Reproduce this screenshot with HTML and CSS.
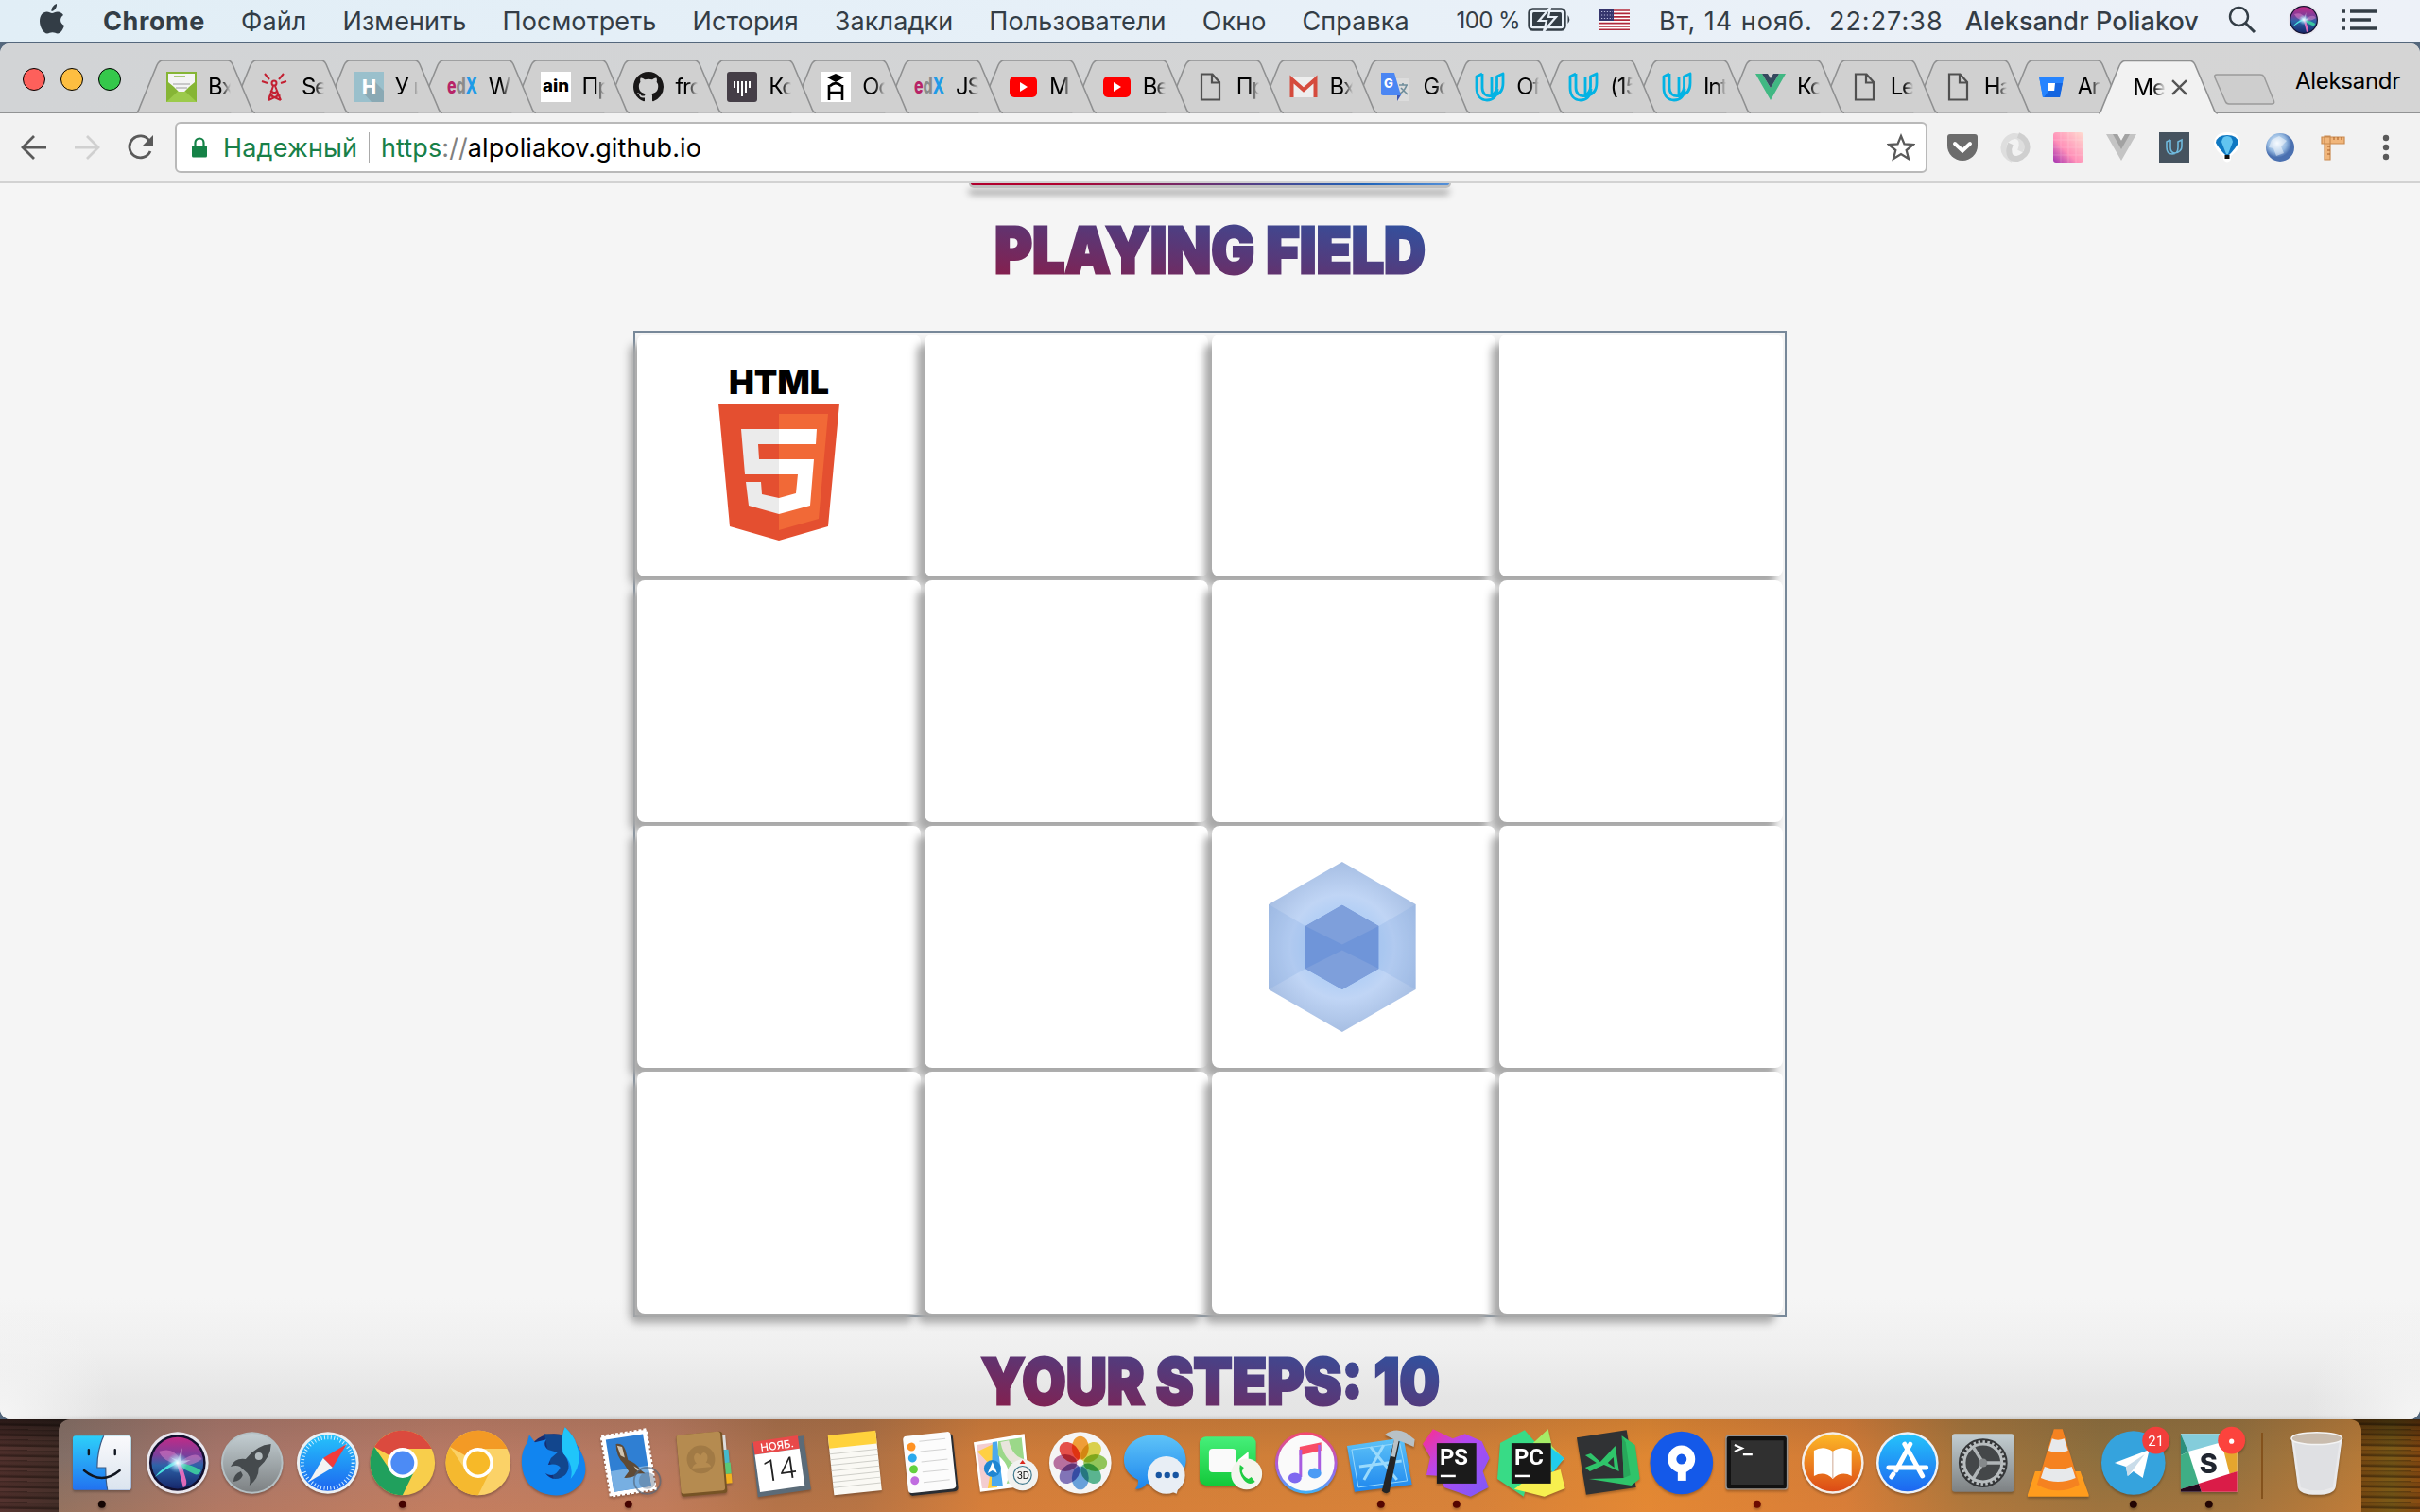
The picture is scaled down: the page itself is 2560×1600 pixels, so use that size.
FILE: index.html
```html
<!DOCTYPE html>
<html lang="ru">
<head>
<meta charset="utf-8">
<title>Memory game</title>
<link rel="stylesheet" href="styles.css">
</head>
<body>
<svg class="sprite" aria-hidden="true">
  <defs>
    <linearGradient id="heading" x1="0" y1="1" x2="1" y2="0"><stop offset="0" stop-color="#8e1a45"/><stop offset=".5" stop-color="#583878"/><stop offset="1" stop-color="#2857a8"/></linearGradient>
    <radialGradient id="wp" cx="1419.8" cy="1002" r="92" gradientUnits="userSpaceOnUse"><stop offset=".45" stop-color="#b5d0f5"/><stop offset=".6" stop-color="#c0d5f5"/><stop offset="1" stop-color="#a5bde2"/></radialGradient>
    <linearGradient id="finder" x1="0" y1="0" x2="0" y2="1"><stop offset="0" stop-color="#2dd0fa"/><stop offset="1" stop-color="#2272f0"/></linearGradient>
    <linearGradient id="white" x1="0" y1="0" x2="0" y2="1"><stop offset="0" stop-color="#fafafc"/><stop offset="1" stop-color="#dbe4ef"/></linearGradient>
    <linearGradient id="siri" x1="0" y1="0" x2="0" y2="1"><stop offset="0" stop-color="#c22a86"/><stop offset=".35" stop-color="#7b3f9c"/><stop offset=".55" stop-color="#2d63a8"/><stop offset="1" stop-color="#16276b"/></linearGradient>
    <radialGradient id="glow"><stop offset="0" stop-color="#fff"/><stop offset=".3" stop-color="#c9f0ff" stop-opacity=".8"/><stop offset="1" stop-color="#7fd8f5" stop-opacity="0"/></radialGradient>
    <linearGradient id="silver" x1="0" y1="0" x2="0" y2="1"><stop offset="0" stop-color="#c3ced2"/><stop offset="1" stop-color="#7d8183"/></linearGradient>
    <linearGradient id="blue" x1="0" y1="0" x2="0" y2="1"><stop offset="0" stop-color="#25c3fb"/><stop offset="1" stop-color="#1d66f0"/></linearGradient>
    <linearGradient id="sky" x1="0" y1="0" x2="0" y2="1"><stop offset="0" stop-color="#5fc4f8"/><stop offset="1" stop-color="#1d86ee"/></linearGradient>
    <linearGradient id="green" x1="0" y1="0" x2="0" y2="1"><stop offset="0" stop-color="#46ef7a"/><stop offset="1" stop-color="#14c93a"/></linearGradient>
    <linearGradient id="orange" x1="0" y1="0" x2="0" y2="1"><stop offset="0" stop-color="#fdb827"/><stop offset="1" stop-color="#dc4a16"/></linearGradient>
    <linearGradient id="tunes" x1="0" y1="0" x2="0" y2="1"><stop offset="0" stop-color="#f5486a"/><stop offset=".6" stop-color="#a060e8"/><stop offset="1" stop-color="#3db4f8"/></linearGradient>
    <linearGradient id="storm" x1="0" y1="0" x2="1" y2="1"><stop offset="0" stop-color="#ff2d8a"/><stop offset=".4" stop-color="#b548f0"/><stop offset="1" stop-color="#7a5af8"/></linearGradient>
    <linearGradient id="pink" x1="0" y1="1" x2="1" y2="0"><stop offset="0" stop-color="#a431b0"/><stop offset=".4" stop-color="#ff8fb8"/><stop offset="1" stop-color="#ffdcd0"/></linearGradient>
    <radialGradient id="globe" cx=".4" cy=".35"><stop offset="0" stop-color="#f0f8ff"/><stop offset=".65" stop-color="#94b8e0"/><stop offset="1" stop-color="#4a70b0"/></radialGradient>
  </defs>
  <symbol id="tab" viewBox="0 0 126 57"><path d="M0 56.500C2 56 3 53 4 50L22 6Q24.500 1 28 1H97Q100 1 102 5L121 50Q123 56 126 56.500" stroke="#8f9091" stroke-width="1.600"/></symbol>
  <symbol id="page" viewBox="0 0 32 32"><path d="M7 2.500H18.500L26 11V29.500H7ZM18 3V11.500H26" fill="none" stroke="#505050" stroke-width="2.200"/></symbol>
  <symbol id="udacity" viewBox="0 0 32 32"><path d="M8 2L2 5V17C2 26 7 30 13 30S24 26 24 18M8 2V17C8 23 12 26 17 25.500C25 25 30 21 30 12V2L23.500 5V16C23.500 20 21 23 18 25.500V5" fill="none" stroke="#02b3e4" stroke-width="2.800" stroke-linejoin="round"/></symbol>
  <symbol id="youtube" viewBox="0 0 32 32"><rect x="2" y="5" width="29" height="22" rx="5" fill="#f00"/><path d="M13 11L21 16L13 21Z" fill="#fff"/></symbol>
  <symbol id="vue" viewBox="0 0 32 32"><path d="M0 2H7L16 17L25 2H32L16 30Z" fill="#41b883"/><path d="M7 2H13L16 7L19 2H25L16 17Z" fill="#35495e"/></symbol>
  <symbol id="siriball" viewBox="-34 -34 68 68"><circle r="33" fill="#e9e7ee"/><circle r="30" fill="#120f2e"/><circle r="27.500" fill="url(#siri)"/><path d="M-20-12Q-4-18 4-2Q20-14 26-4Q12 6 0 1Q-14 0-20-12Z" fill="#f08fd0" opacity=".45"/><path d="M1 0Q-12 6-24 15Q-17 5 0-3Z" fill="#4ef0e4" opacity=".9"/><path d="M2 0Q16 2 25 8Q22 15 16 11Q8 8 1 2Z" fill="#3fd8a0" opacity=".85"/><path d="M-1 0Q3 13 6 26Q12 25 8 14Q6 6 3 0Z" fill="#f56fc0" opacity=".9"/><path d="M-8-6L0-3L5-16L4-2L14-3L4 2Z" fill="#fff" opacity=".45"/><circle r="11" fill="url(#glow)"/></symbol>
</svg>

<header class="menubar">
  <svg class="apple" viewBox="0 0 26 32"><path d="M18 0C18.500 4 15.500 8 12.500 8C12 4 15 1 18 0ZM13 10C15 10 16 8.500 19 8.500C21.500 8.500 23.800 9.800 25 12C20.500 15 21.500 21 26 23C24.500 27.500 22 31.500 19 31.500C17 31.500 16 30.300 13.500 30.300S10 31.500 8 31.500C4 31.500 0 24.500 0 18.500C0 12 3.500 8.500 7.500 8.500C10 8.500 11.500 10 13 10Z" fill="#333d46"/></svg>
  <nav class="menus"><b>Chrome</b><span>Файл</span><span>Изменить</span><span>Посмотреть</span><span>История</span><span>Закладки</span><span>Пользователи</span><span>Окно</span><span>Справка</span></nav>
  <div class="status">
    <span class="percent">100 %</span>
    <svg class="battery" viewBox="0 0 46 26"><rect x="1.500" y="1.500" width="38" height="22" rx="4" fill="none" stroke="#333d46" stroke-width="2.400"/><rect x="5" y="5" width="31" height="15" rx="1.500" fill="#333d46"/><path d="M42.500 8Q46 12.500 42.500 17Z" fill="#333d46"/><path d="M24 0L12 14H20L17 25L30 10H22Z" fill="#333d46" stroke="#e9f0f8" stroke-width="2.200"/></svg>
    <svg class="flag" viewBox="0 0 32 22"><path d="M0 0H32V22H0Z" fill="#fff"/><path d="M0 1H32M0 4.400H32M0 7.800H32M0 11.200H32M0 14.600H32M0 18H32M0 21.300H32" stroke="#b0273a" stroke-width="1.700"/><path d="M0 0H15V12H0Z" fill="#35356d"/><path d="M2 2.500H14M2 6H14M2 9.500H14" stroke="#b9bcdb" stroke-width="1.200" stroke-dasharray="1.200 1.700"/></svg>
    <span class="clock">Вт, 14 нояб.&nbsp; 22:27:38</span>
    <span class="user">Aleksandr Poliakov</span>
    <svg class="search" viewBox="0 0 30 30"><circle cx="11.500" cy="11.500" r="9.500" fill="none" stroke="#333d46" stroke-width="2.400"/><path d="M18.500 18.500L28 28" stroke="#333d46" stroke-width="3"/></svg>
    <svg class="siri"><use href="#siriball"/></svg>
    <svg class="list" viewBox="0 0 37 22"><path d="M9 2H37M9 11H31M9 20H37M0 2H4M0 11H4M0 20H4" stroke="#333d46" stroke-width="3.600"/></svg>
  </div>
</header>

<main class="window">
  <div class="tabstrip">
    <div class="lights"><i class="red"></i><i class="yellow"></i><i class="lime"></i></div>
    <div class="tabs">
      <div class="tab"><svg class="shape"><use href="#tab"/></svg><svg class="fav" viewBox="0 0 32 32"><path d="M0 0H32V32H0Z" fill="#86b535"/><path d="M0 32L16 17L32 32Z" fill="#9cca4b"/><path d="M2 2H30V11L24 16L19 21H13L8 16L2 11Z" fill="#f4f4f4"/><path d="M8 5H20" stroke="#a9c878" stroke-width="2"/><path d="M7 13H25M10 17H22" stroke="#c8c8c8" stroke-width="2"/></svg><span>Вх</span></div>
      <div class="tab"><svg class="shape"><use href="#tab"/></svg><svg class="fav" viewBox="0 0 32 32"><circle cx="15" cy="12" r="2.500" fill="none" stroke="#c32032" stroke-width="2"/><path d="M14 15L9 30M16 15L22 30M11 20L20 25L9 30M19 20L11 25L22 30M10 8L5 2M8 12L2 10M20 8L25 2M22 12L28 10" fill="none" stroke="#c32032" stroke-width="2"/></svg><span>Se</span></div>
      <div class="tab"><svg class="shape"><use href="#tab"/></svg><svg class="fav" viewBox="0 0 32 32"><path d="M0 0H32V32H0Z" fill="#9ac0cc"/><path d="M11 23L21 9L32 20V32H19Z" fill="#8aa9b4"/><text x="9" y="23" class="glyph" font-size="20" fill="#fff">H</text></svg><span>У и</span></div>
      <div class="tab"><svg class="shape"><use href="#tab"/></svg><svg class="fav" viewBox="0 0 32 32"><text class="edx" x="0" y="23" textLength="32" lengthAdjust="spacingAndGlyphs"><tspan fill="#b72467">e</tspan><tspan fill="#8b8b8b">d</tspan><tspan fill="#1e9be8">X</tspan></text></svg><span>W</span></div>
      <div class="tab"><svg class="shape"><use href="#tab"/></svg><svg class="fav" viewBox="0 0 32 32"><path d="M0 0H32V32H0Z" fill="#fff"/><text x="2" y="21" class="glyph" font-size="17" textLength="28" lengthAdjust="spacingAndGlyphs">ain</text></svg><span>Пр</span></div>
      <div class="tab"><svg class="shape"><use href="#tab"/></svg><svg class="fav" viewBox="0 0 16 16"><path fill="#191717" d="M8 0C3.580 0 0 3.580 0 8c0 3.540 2.290 6.530 5.470 7.590.4.070.55-.17.55-.38 0-.19-.01-.82-.01-1.490-2.010.37-2.530-.49-2.690-.94-.09-.23-.48-.94-.82-1.130-.28-.15-.68-.52-.01-.53.63-.01 1.080.58 1.230.82.72 1.210 1.870.87 2.330.66.070-.52.280-.87.510-1.070-1.780-.2-3.640-.89-3.640-3.950 0-.87.31-1.590.82-2.150-.08-.2-.36-1.020.08-2.120 0 0 .67-.21 2.200.82a7.700 7.700 0 0 1 4 0c1.530-1.040 2.200-.82 2.200-.82.44 1.100.16 1.920.08 2.120.51.560.82 1.270.82 2.150 0 3.070-1.870 3.750-3.650 3.950.29.25.54.73.54 1.480 0 1.070-.01 1.930-.01 2.200 0 .21.15.46.55.38A8 8 0 0 0 16 8c0-4.420-3.580-8-8-8Z"/></svg><span>fro</span></div>
      <div class="tab"><svg class="shape"><use href="#tab"/></svg><svg class="fav" viewBox="0 0 32 32"><rect width="32" height="32" rx="3" fill="#453e47"/><path d="M8 10V17M12 10V22M16 10V26M20 10V22M24 10V17" stroke="#fff" stroke-width="2"/></svg><span>Ко</span></div>
      <div class="tab"><svg class="shape"><use href="#tab"/></svg><svg class="fav" viewBox="0 0 32 32"><path d="M0 0H32V32H0Z" fill="#fff"/><path d="M16 2L25 6L16 11L7 6Z"/><path d="M9 14V30M23 14V30M9 22H23M10 15Q16 9 22 15" fill="none" stroke="#000" stroke-width="2.600"/></svg><span>Ос</span></div>
      <div class="tab"><svg class="shape"><use href="#tab"/></svg><svg class="fav" viewBox="0 0 32 32"><text class="edx" x="0" y="23" textLength="32" lengthAdjust="spacingAndGlyphs"><tspan fill="#b72467">e</tspan><tspan fill="#8b8b8b">d</tspan><tspan fill="#1e9be8">X</tspan></text></svg><span>JS</span></div>
      <div class="tab"><svg class="shape"><use href="#tab"/></svg><svg class="fav"><use href="#youtube"/></svg><span>M</span></div>
      <div class="tab"><svg class="shape"><use href="#tab"/></svg><svg class="fav"><use href="#youtube"/></svg><span>Ве</span></div>
      <div class="tab"><svg class="shape"><use href="#tab"/></svg><svg class="fav"><use href="#page"/></svg><span>Пр</span></div>
      <div class="tab"><svg class="shape"><use href="#tab"/></svg><svg class="fav" viewBox="0 0 32 32"><path d="M2 6H30V27H2Z" fill="#eee"/><path d="M3.500 27V8L16 19L28.500 8V27" fill="none" stroke="#d54b3d" stroke-width="4"/></svg><span>Вх</span></div>
      <div class="tab"><svg class="shape"><use href="#tab"/></svg><svg class="fav" viewBox="0 0 32 32"><path d="M12 7H30V31H18Z" fill="#dcdcdc"/><path d="M17 23H22L17 31Z" fill="#3b55b5"/><path d="M0 1H14L21 25H2Q0 25 0 23Z" fill="#4b86f3"/><text x="3" y="17" class="glyph" font-size="13" fill="#fff">G</text><path d="M19 14H28M23 12V14M27 14Q25 20 20 23M21 17L28 24" fill="none" stroke="#6f8d9b" stroke-width="1.600"/></svg><span>Go</span></div>
      <div class="tab"><svg class="shape"><use href="#tab"/></svg><svg class="fav"><use href="#udacity"/></svg><span>Of</span></div>
      <div class="tab"><svg class="shape"><use href="#tab"/></svg><svg class="fav"><use href="#udacity"/></svg><span>(15</span></div>
      <div class="tab"><svg class="shape"><use href="#tab"/></svg><svg class="fav"><use href="#udacity"/></svg><span>Int</span></div>
      <div class="tab"><svg class="shape"><use href="#tab"/></svg><svg class="fav"><use href="#vue"/></svg><span>Ко</span></div>
      <div class="tab"><svg class="shape"><use href="#tab"/></svg><svg class="fav"><use href="#page"/></svg><span>Le</span></div>
      <div class="tab"><svg class="shape"><use href="#tab"/></svg><svg class="fav"><use href="#page"/></svg><span>На</span></div>
      <div class="tab"><svg class="shape"><use href="#tab"/></svg><svg class="fav" viewBox="0 0 32 32"><path d="M3 5H29L25 27H7Z" fill="#2684ff"/><path d="M20 12H28L25 27H8Z" fill="#1465e0"/><path d="M3 5H29L28 12H20V20H12L8 27H7Z" fill="#2684ff"/><path d="M12 12H20L19 20H13Z" fill="#fff"/></svg><span>Ar</span></div>
      <div class="tab active"><svg class="shape"><use href="#tab"/></svg><span>Me</span><svg class="close" viewBox="0 0 16 16"><path d="M1 1L15 15M15 1L1 15" stroke="#555" stroke-width="2.200"/></svg></div>
    </div>
    <svg class="newtab" viewBox="0 0 66 33"><path d="M4 1H50Q53 1 54 3L64.500 29Q65.500 32 62 32H17Q14 32 13 29L2 4Q1 1 4 1Z" fill="#cecece" stroke="#9b9b9b" stroke-width="1.500"/></svg>
    <span class="profile">Aleksandr</span>
  </div>

  <div class="toolbar">
    <svg class="nav" viewBox="0 0 28 28"><path d="M27 14H3M14 2L2 14L14 26" fill="none" stroke="#5a5a5a" stroke-width="2.800"/></svg>
    <svg class="nav forward" viewBox="0 0 28 28"><path d="M1 14H25M14 2L26 14L14 26" fill="none" stroke="#d0d0d0" stroke-width="2.800"/></svg>
    <svg class="nav reload" viewBox="0 0 28 28"><path d="M24 18A11.500 11.500 0 1 1 23 7" fill="none" stroke="#5a5a5a" stroke-width="2.800"/><path d="M27 1V12H16Z" fill="#5a5a5a"/></svg>
    <div class="omnibox">
      <svg class="lock" viewBox="0 0 18 22"><rect x="1" y="9" width="16" height="12.500" rx="1.500" fill="#158247"/><path d="M4.500 9V6A4.500 4.500 0 0 1 13.500 6V9" fill="none" stroke="#158247" stroke-width="2.200"/></svg>
      <span class="secure">Надежный</span><i class="sep"></i>
      <span class="url"><em>https</em><small>://</small>alpoliakov.github.io</span>
      <svg class="star" viewBox="0 0 30 30"><path d="M15 3L18.500 11.500L28 12L20.700 18L23 27L15 22L7 27L9.300 18L2 12L11.500 11.500Z" fill="none" stroke="#5a5a5a" stroke-width="2.300"/></svg>
    </div>
    <div class="extensions">
      <svg viewBox="0 0 32 32"><path d="M3 2H29Q32 2 32 5V14A16 16 0 0 1 0 14V5Q0 2 3 2Z" fill="#6c6c6c"/><path d="M8 12L16 19.500L24 12" fill="none" stroke="#fff" stroke-width="4" stroke-linecap="round"/></svg>
      <svg viewBox="0 0 32 32"><g fill="none" stroke-width="6"><path d="M13 29C0 24 0 8 14 4C24 3 24 14 21 20" stroke="#dedede"/><path d="M19 3C32 8 32 24 18 28C8 29 8 18 11 12" stroke="#cfcfcf"/></g></svg>
      <svg viewBox="0 0 32 32"><rect width="32" height="32" rx="3" fill="url(#pink)"/><path d="M8 0V32M16 0V32M24 0V32M0 8H32M0 16H32M0 24H32" stroke="#fff" opacity=".18"/></svg>
      <svg viewBox="0 0 32 32"><path d="M0 2H12L16 9L20 2H32L16 30Z" fill="#c4c4c4"/><path d="M7 2H12L16 9L20 2H25L16 18Z" fill="#a2a2a2"/></svg>
      <svg viewBox="0 0 32 32"><path d="M0 0H32V32H0Z" fill="#46535f"/><path d="M12 8L8 10V16Q8 23 14 23T20 16V10L24 8V15Q24 21 16 22Q12 21 12 16V8" fill="none" stroke="#6fb9dd" stroke-width="1.600"/></svg>
      <svg viewBox="0 0 32 32"><path d="M16 0Q29 0 30 12Q28 19 20 25V29Q16 34 12 29V25Q3 19 2 12Q3 0 16 0Z" fill="#fff"/><path d="M4 11Q5 3 16 3T28 11Q25 17 18 24H14Q7 17 4 11Z" fill="#0f78c2"/><path d="M10 10Q11 4 16 4T22 10L17 23H15Z" fill="#62c4f0"/><path d="M13.500 24H18.500V28H13.500Z" fill="#111"/></svg>
      <svg viewBox="0 0 32 32"><circle cx="16" cy="16" r="15" fill="url(#globe)"/><path d="M7 8L15 4L23 9L17 15L20 22L12 25L9 17L4 16Z" fill="#fff" opacity=".45"/></svg>
      <svg viewBox="0 0 32 32"><path d="M7 4H13V29H7ZM4 5H28V12H4Z" fill="#f1b67b" stroke="#c98a50" stroke-width="1.200"/><path d="M17 5V8M21 5V8M25 5V8M10 15H13M10 19H13M10 23H13" stroke="#a75d26"/></svg>
      <svg viewBox="0 0 32 32"><g fill="#5a5a5a"><circle cx="16" cy="6" r="3.200"/><circle cx="16" cy="16" r="3.200"/><circle cx="16" cy="26" r="3.200"/></g></svg>
    </div>
  </div>

  <section class="page">
    <div class="banner"></div>
    <svg class="title" viewBox="0 0 474 70"><text x="9" y="60" textLength="456" lengthAdjust="spacingAndGlyphs">PLAYING FIELD</text></svg>
    <div class="field">
      <div class="card"><svg class="html5" viewBox="0 0 128 180"><text x="11" y="24.500" font-size="34" textLength="106" lengthAdjust="spacingAndGlyphs">HTML</text><path d="M0 35H128L116 165L64 180L12 165Z" fill="#e44f30"/><path d="M64 46H116L106 157L64 169Z" fill="#f16937"/><path d="M24 62H64V78H42L43 94H64V110H28ZM29 118H45L46 131L64 135V152L32 143Z" fill="#ebebeb"/><path d="M64 62H104L103 78H64ZM64 94H101L97 143L64 152V135L82 130L84 110H64Z" fill="#fff"/></svg></div>
      <div class="card"></div><div class="card"></div><div class="card"></div>
      <div class="card"></div><div class="card"></div><div class="card"></div><div class="card"></div>
      <div class="card"></div><div class="card"></div>
      <div class="card"><svg class="webpack" viewBox="1342 912 156 180"><path d="M1419.800 912L1497.600 957V1047L1419.800 1092L1342 1047V957Z" fill="url(#wp)"/><path d="M1342 957L1381 980V1025L1342 1047ZM1497.600 957L1458.500 980V1025L1497.600 1047Z" fill="#7aa5e0" opacity=".22"/><path d="M1419.800 957.700L1458.500 980V1025L1419.800 1047L1381 1025V980Z" fill="#6f95d9"/><path d="M1419.800 957.700L1458.500 980L1419.800 999.500L1381 980ZM1419.800 1005.500L1458.500 1025L1419.800 1047L1381 1025Z" fill="#7e9fdb"/></svg></div>
      <div class="card"></div>
      <div class="card"></div><div class="card"></div><div class="card"></div><div class="card"></div>
    </div>
    <svg class="title steps" viewBox="0 0 504 70"><text x="10" y="60" textLength="485" lengthAdjust="spacingAndGlyphs">YOUR STEPS: 10</text></svg>
  </section>
</main>

<footer class="desktop">
  <div class="dock">
    <svg class="app" viewBox="-40 -46 80 98"><rect x="-31" y="-29" width="62" height="58" rx="3" fill="url(#finder)"/><path d="M2-29H28Q31-29 31-26V26Q31 29 28 29H6Q4 20 4 5H-5Q-5-14 2-29Z" fill="url(#white)"/><path d="M2-29Q-5-14-5 5H4Q4 20 6 29" fill="none" stroke="#3c5c86" stroke-width="1.200"/><path d="M-14-14V-9M14-14V-9M-19 8Q0 24 19 8" fill="none" stroke="#10151f" stroke-width="2.400" stroke-linecap="round"/><circle cy="44" r="4" fill="#140503"/></svg>
    <svg class="app" viewBox="-40 -46 80 98"><use href="#siriball" x="-34" y="-34" width="68" height="68"/></svg>
    <svg class="app" viewBox="-40 -46 80 98"><circle r="33" fill="#b5c0c4"/><circle r="31" fill="url(#silver)"/><path d="M20-20Q5-19-7-4Q-18-6-23 4Q-17 2-13 4L-5 11Q-1 16-3 24Q7 17 7 5Q20-6 20-20ZM-12 9Q-20 12-20 20Q-12 19-10 13Z" fill="#454a4d"/><circle cx="7" cy="-7" r="4" fill="#b3bbbe"/></svg>
    <svg class="app" viewBox="-40 -46 80 98"><circle r="33" fill="#ecf0f3"/><circle r="30" fill="url(#blue)"/><circle r="27" fill="none" stroke="#d3f0ff" stroke-width="4" stroke-dasharray="1 2.500"/><path d="M20-20L5 5L-5-5Z" fill="#f23b3b"/><path d="M-20 20L5 5L-5-5Z" fill="#f3f3f3"/></svg>
    <svg class="app" viewBox="-40 -46 80 98"><circle r="34.500" fill="#f8ce4b"/><path d="M0 0L-30-17A34.500 34.500 0 0 1 31-15H0Z" fill="#db4a3e"/><path d="M-30-17L-13 8L0 15L14 6L0 34.500A34.500 34.500 0 0 1-30-17Z" fill="#20a05d"/><circle r="16" fill="#fff"/><circle r="12.500" fill="#4c8bf5"/><circle cy="44" r="4" fill="#450300"/></svg>
    <svg class="app" viewBox="-40 -46 80 98"><circle r="34.500" fill="#fbd267"/><path d="M0 0L-30-17A34.500 34.500 0 0 1 31-15H0Z" fill="#f39a25"/><path d="M-30-17L-13 8L0 15L14 6L0 34.500A34.500 34.500 0 0 1-30-17Z" fill="#f5b92f"/><circle r="16" fill="#fff"/><circle r="12.500" fill="#f7b928"/></svg>
    <svg class="app" viewBox="-40 -46 80 98"><circle r="31" fill="#162d72"/><path d="M-10-31L15-30L24-15L20 12L0 18Z" fill="#12468d"/><path d="M-26-30L-20-22L-8-25Q-12-19-6-14L4-11L-3-5L-6 2Q4 0 7 5Q1 17-9 11Q0 22 12 13Q21 3 9-12Q8-28 12-38Q22-28 24-20Q42 7 27 24Q12 39-9 33Q-32 26-34 2Q-35-13-28-22Z" fill="#1185f0"/><path d="M12-38Q22-28 24-20Q32 0 18 17Q22 2 10-10Q7-28 12-38Z" fill="#20c5fa"/></svg>
    <svg class="app" viewBox="-40 -46 80 98"><g transform="rotate(-9)"><rect x="-24" y="-32" width="48" height="64" fill="#fff" stroke="#fff" stroke-width="3" stroke-dasharray="3 2"/><rect x="-20" y="-28" width="40" height="56" fill="#2f7fd3"/><path d="M-20 6H20V28H-20Z" fill="#77afe2"/><path d="M-10-22Q-2-22-1-14L0-3Q8 1 12 10L16 14L8 13Q2 17-7 15L-1 9L-5 0Q-12-9-10-22Z" fill="#5f4a35"/><path d="M-9-20L-4-18L-3-6L-7-9ZM5 4L11 9L8 10Z" fill="#cfc4b2"/></g><circle cx="20" cy="19" r="14" fill="none" stroke="#52657b" stroke-width="1.800" opacity=".65"/><circle cx="20" cy="19" r="9" fill="#52657b" opacity=".4"/><circle cy="44" r="4" fill="#450300"/></svg>
    <svg class="app" viewBox="-40 -46 80 98"><g transform="rotate(-5)"><path d="M17-28H25V-12H17Z" fill="#ddd"/><path d="M18-12H27V2H18Z" fill="#45b9cc"/><path d="M18 2H28V14H18Z" fill="#5bc876"/><path d="M18 14H28V24H18Z" fill="#f3b21f"/><rect x="-27" y="-32" width="49" height="66" rx="3" fill="#765325"/><rect x="-27" y="-32" width="47" height="63" rx="3" fill="#b58b50"/><circle cx="-3" cy="-4" r="15" fill="#a17a45"/><path d="M-13 5Q-12 1-8 0Q-11-4-10-8Q-7-14-3-8Q1-14 4-8Q5-4 2 0Q6 1 7 5Z" fill="#b58b50"/></g></svg>
    <svg class="app" viewBox="-40 -46 80 98"><g transform="rotate(-8)"><path d="M-25-25H30V33H-27Z" fill="#5b6b78"/><path d="M-24-26H24V-12H-24Z" fill="#e94949"/><path d="M-24-12H24V28H-24Z" fill="#fff"/><text x="-17" y="-14.500" class="month">НОЯБ.</text><text x="-18" y="18" class="day">14</text></g></svg>
    <svg class="app" viewBox="-40 -46 80 98"><g transform="rotate(-6)"><path d="M-25-30H26V32H-25Z" fill="#faf9f4"/><path d="M-25-32H26V-18H-25Z" fill="#ffd23c"/><path d="M-25-12H26M-25-6H26M-25 0H26M-25 6H26M-25 12H26M-25 18H26M-25 24H26" stroke="#cfcfc9"/></g></svg>
    <svg class="app" viewBox="-40 -46 80 98"><g transform="rotate(-6)"><rect x="-25" y="-29" width="52" height="62" rx="4" fill="#292d33"/><rect x="-26" y="-31" width="51" height="61" rx="4" fill="#fcfcfc"/><circle cx="-18" cy="-19" r="4.500" fill="#ff9224"/><circle cx="-18" cy="-7" r="4.500" fill="#2ba9ec"/><circle cx="-18" cy="5" r="4.500" fill="#62d13f"/><circle cx="-18" cy="17" r="4.500" fill="#c06de0"/><path d="M-9-24H19M-9-13H19M-9-2H19M-9 9H19M-9 20H19" stroke="#d3d3d3"/></g></svg>
    <svg class="app" viewBox="-40 -46 80 98"><path d="M-33-22L21-31L26 24L-26 31Z" fill="#fff"/><path d="M-30-19L-10-22L-17 27L-24 27Z" fill="#f3cdd0"/><path d="M-29-12L-6 12L-8 26L-18 27L-10-21" fill="#ffd044"/><path d="M-13-22L-8-23L-2 24H-14Z" fill="#4ba9ee"/><path d="M-7-23L18-27L23 19L2 22Q9 5-7-8Z" fill="#9bd889"/><path d="M0-23Q4-2 22 1" fill="none" stroke="#e8e5dc" stroke-width="9"/><circle cx="-13" cy="6" r="9" fill="#1f86d2"/><path d="M-13-1L-8 11L-13 8L-18 11Z" fill="#fff"/><circle cx="19" cy="13" r="16.500" fill="#f2f2f0"/><circle cx="19" cy="13" r="9.500" fill="none" stroke="#3e788d" stroke-width="1.200"/><text x="13" y="17" font-size="10">3D</text><path d="M16 1H22L19-3Z" fill="#db281e"/></svg>
    <svg class="app" viewBox="-40 -46 80 98"><circle r="33" fill="#f5f5f5"/><g class="petals"><ellipse cy="-16" rx="9" ry="12.500" fill="#f99b24"/><ellipse cy="-16" rx="9" ry="12.500" transform="rotate(45)" fill="#dfd53b"/><ellipse cy="-16" rx="9" ry="12.500" transform="rotate(90)" fill="#8cc84b"/><ellipse cy="-16" rx="9" ry="12.500" transform="rotate(135)" fill="#4bb58b"/><ellipse cy="-16" rx="9" ry="12.500" transform="rotate(180)" fill="#5b9de0"/><ellipse cy="-16" rx="9" ry="12.500" transform="rotate(225)" fill="#796ab8"/><ellipse cy="-16" rx="9" ry="12.500" transform="rotate(270)" fill="#b8659c"/><ellipse cy="-16" rx="9" ry="12.500" transform="rotate(315)" fill="#ed3f39"/></g></svg>
    <svg class="app" viewBox="-40 -46 80 98"><path d="M0-30C20-30 33-18 33-3S20 23 0 23C-3 23-6 23-9 22Q-13 28-21 28Q-17 23-18 18C-28 13-33 6-33-3C-33-18-20-30 0-30Z" fill="url(#sky)"/><circle cx="12" cy="13" r="20" fill="#e8eef5"/><path d="M16 30L25 26L23 33Z" fill="#e8eef5"/><g fill="#1755a1"><circle cx="4" cy="13" r="3.200"/><circle cx="13" cy="13" r="3.200"/><circle cx="22" cy="13" r="3.200"/></g></svg>
    <svg class="app" viewBox="-40 -46 80 98"><rect x="-33" y="-28" width="60" height="52" rx="7" fill="url(#green)"/><rect x="-23" y="-15" width="29" height="25" rx="4" fill="#fafafa"/><path d="M8-3L19-12V6L8 1Z" fill="#fff"/><circle cx="17" cy="12" r="16.500" fill="#f4f5ee"/><path d="M10 2L14 5L12 9Q14 15 19 17L22 15L26 20Q20 25 14 18T10 2Z" fill="#20cc43"/></svg>
    <svg class="app" viewBox="-40 -46 80 98"><circle r="33" fill="url(#tunes)"/><circle r="30" fill="#fafafa"/><path d="M-7-17L16-22V-13L-7-8Z" fill="#f84c66"/><path d="M-6-14V15M14-19V9" stroke="#a85ce0" stroke-width="3"/><ellipse cx="-12" cy="16" rx="7" ry="5.500" fill="#7f68f0"/><ellipse cx="9" cy="11" rx="7" ry="5.500" fill="#4b9bf5"/></svg>
    <svg class="app" viewBox="-40 -46 80 98"><path d="M-36-18L24-27L33 23L-28 31Z" fill="url(#sky)"/><path d="M-31-14L20-21L28 19L-24 26Z" fill="none" stroke="#98d8fa"/><path d="M-18 18L3-19M-11-17L17 18M-23 4L22-2" stroke="#9adafc" stroke-width="3" fill="none"/><path d="M14-24L20-23L9 31Q5 34 1 30Z" fill="#242526"/><path d="M19-24L15-6L11-7L14-25L4-30Q15-38 27-32L36-25L35-17L28-20Z" fill="#b8c1c6"/><circle cy="44" r="4" fill="#550500"/></svg>
    <svg class="app" viewBox="-40 -46 80 98"><path d="M-25-36L-4-26L9-31L27-23L35-5L28 9L34 26L15 36L-13 26L-16 14L-32 13L-28-6L-36-20Z" fill="url(#storm)"/><rect x="-21" y="-21" width="42" height="43" fill="#1b1b1b"/><text x="-18" y="2" class="code">PS</text><path d="M-17 14H-1" stroke="#fff" stroke-width="2.500"/><circle cy="44" r="4" fill="#550500"/></svg>
    <svg class="app" viewBox="-40 -46 80 98"><path d="M-33-21L-7-35L6-20L-8 36L-36 17Z" fill="#38db86"/><path d="M2-21L18-36L22-18L35-4L18 12Z" fill="#a5ed67"/><path d="M20-17L35-5L22 12Z" fill="#21ccec"/><path d="M-18 28L-5 18L31 7L36 27L14 36Z" fill="#f7ef4f"/><rect x="-21" y="-21" width="42" height="43" fill="#171717"/><text x="-18" y="2" class="code">PC</text><path d="M-17 14H-1" stroke="#fff" stroke-width="2.500"/></svg>
    <svg class="app" viewBox="-40 -46 80 98"><path d="M-32-27L21-35L31 26L-22 34Z" fill="#303234"/><path d="M16-29L30-19L35 17L26 24L-19 17L18 16Z" fill="#2fc46a"/><path d="M16-29L20-22L25 13L18 16Z" fill="#28a85b"/><path d="M-23-8L-17-10L-7-1L9-18L13 9L-3 2L-18 9L-23 5L-11 0ZM7-6L1 0L8 5Z" fill="#2fc46a" fill-rule="evenodd"/></svg>
    <svg class="app" viewBox="-40 -46 80 98"><circle r="33.500" fill="#1459e9"/><circle cy="-4" r="10" fill="none" stroke="#fff" stroke-width="9"/><path d="M-4 6H5V19H-4Z" fill="#fff"/></svg>
    <svg class="app" viewBox="-40 -46 80 98"><rect x="-33" y="-29" width="65" height="57" rx="3" fill="#111" stroke="#97928e" stroke-width="1.500"/><path d="M-28-24H28V23H-28Z" fill="#303030"/><path d="M-24-19L-16-15.500L-24-12M-15-9H-5" fill="none" stroke="#fff" stroke-width="2.200"/><circle cy="44" r="4" fill="#6d0b00"/></svg>
    <svg class="app" viewBox="-40 -46 80 98"><circle r="33" fill="#f4eee9"/><circle r="30.500" fill="url(#orange)"/><path d="M0-12Q-10-19-20-13V14Q-9 8 0 17Q9 8 20 14V-13Q10-19 0-12Z" fill="#fff"/><path d="M0-12V16" stroke="#dfc5b6" stroke-width="1.500"/></svg>
    <svg class="app" viewBox="-40 -46 80 98"><circle r="33" fill="#edf2f7"/><circle r="30.500" fill="url(#blue)"/><path d="M-3-20L16 14M3-20L-12 8M-20 5H20M-15 12L-17 15" fill="none" stroke="#fff" stroke-width="5" stroke-linecap="round"/></svg>
    <svg class="app" viewBox="-40 -46 80 98"><rect x="-33" y="-31" width="66" height="62" rx="3" fill="url(#silver)"/><circle r="26" fill="#343638"/><circle r="20" fill="#444749" stroke="#b8bdbf" stroke-width="3"/><circle r="22.500" fill="none" stroke="#b8bdbf" stroke-width="3" stroke-dasharray="2.500 2.500"/><path d="M0 0L-10-16M0 0H19M0 0L-10 16" stroke="#b0b5b7" stroke-width="3.500"/><circle r="4.500" fill="#85898b"/></svg>
    <svg class="app" viewBox="-40 -46 80 98"><path d="M-24 9H24L33 34V36H-32V34Z" fill="#ff9c1d"/><path d="M-4-36H5L23 23Q0 36-22 23Z" fill="#f58220"/><path d="M-6-26Q0-23 7-26L11-13Q0-9-10-13ZM-14 4Q0 10 15 4L19 16Q0 24-18 16Z" fill="#e7e9eb"/></svg>
    <svg class="app" viewBox="-40 -46 80 98"><circle r="34" fill="#35a3dd"/><path d="M-20 0L17-14L10 16L0 9L-6 14L-8 4Z" fill="#fff"/><path d="M-8 4L12-9L-1 8L-6 14Z" fill="#c9dce9"/><circle cx="24" cy="-24" r="14.500" fill="#f23e3b"/><text x="24" y="-18.500" class="badge">21</text><circle cy="44" r="4" fill="#230503"/></svg>
    <svg class="app" viewBox="-40 -46 80 98"><path d="M-30-31H30V31H-30Z" fill="#fff"/><path d="M-30-31H11L13-22L-22-12Z" fill="#84cddb"/><path d="M-30-31L-22-12L-30-8Z" fill="#2b8f7c"/><path d="M-30-8L-22-12L-11 22L-30 28Z" fill="#3fae85"/><path d="M11-31H30V9L22 12Z" fill="#e5a62e"/><path d="M-11 22L30 9V31H-8Z" fill="#da1c48"/><path d="M-30 28L-11 22L-8 31H-30Z" fill="#22091d"/><text x="-10" y="11" font-size="29" class="glyph" fill="#202530">S</text><circle cx="24" cy="-24" r="14.500" fill="#fc433d"/><circle cx="24" cy="-23" r="2.600" fill="#fff"/><circle cy="44" r="4" fill="#230503"/></svg>
    <i class="divider"></i>
    <svg class="app trash" viewBox="-40 -46 80 98"><path d="M-27-26L-20 26Q-18 34 0 34T20 26L27-26Z" fill="#e9e9eb"/><path d="M-24-22L-17 26Q0 33 17 26L24-22Z" fill="#dfe0e3"/><ellipse cy="-26" rx="27" ry="6.500" fill="#c9bcae" stroke="#f4f4f4" stroke-width="1.500"/></svg>
  </div>
</footer>
</body>
</html>
```

FILE: styles.css
```css
* { box-sizing: border-box; }
body { margin: 0; width: 2560px; height: 1600px; overflow: hidden; display: flex; flex-direction: column; background: #54677c; font-family: Inter, "Liberation Sans", sans-serif; }
svg { display: block; flex: none; }
.sprite { position: absolute; width: 0; height: 0; }

.menubar { height: 46px; flex: none; display: flex; align-items: center; padding: 0 46px 2px 42px; background: linear-gradient(90deg, #e1eef6, #e7f0f8 50%, #edf1f8); border-bottom: 2px solid #54677c; color: #333d46; font-size: 27px; white-space: nowrap; }
.apple { width: 26px; height: 32px; margin-top: -3px; }
.menus { display: flex; gap: 38px; margin-left: 41px; letter-spacing: .1px; padding-top: 2px; }
.menus b { font-weight: 700; letter-spacing: .6px; }
.status { display: flex; align-items: center; margin-left: auto; }
.percent { font-size: 24px; letter-spacing: -.6px; }
.battery { width: 46px; height: 26px; margin-left: 8px; }
.flag { width: 32px; height: 22px; margin-left: 30px; }
.clock { margin-left: 31px; letter-spacing: 1px; padding-top: 2px; }
.user { margin-left: 23px; font-weight: 500; letter-spacing: .1px; padding-top: 2px; }
.search { width: 30px; height: 30px; margin-left: 31px; }
.siri { width: 34px; height: 34px; margin-left: 33px; }
.list { width: 37px; height: 22px; margin-left: 23px; }

.window { height: 1456px; flex: none; border-radius: 10px 10px 12px 12px; overflow: hidden; display: flex; flex-direction: column; background: #f5f5f5; }
.tabstrip { height: 74px; flex: none; display: flex; background: linear-gradient(90deg, #d2d4d6, #d5d5d5); border-bottom: 1.5px solid #929394; }
.lights { display: flex; gap: 16px; padding: 26px 0 0 24px; width: 144px; }
.lights i { width: 24px; height: 24px; border-radius: 50%; border: 1px solid; }
.red { background: #fd605b; border-color: #e24742; }
.yellow { background: #fdbe41; border-color: #dfa03a; }
.lime { background: #35c84b; border-color: #27aa35; }
.tabs { display: flex; margin-top: 17px; height: 57px; width: 2205px; isolation: isolate; }
.tab { position: relative; z-index: 1; flex: none; width: 126px; height: 57px; margin-right: -27.140px; display: grid; grid-template-columns: 32px 44px 24px 1fr; align-items: center; font-size: 24px; white-space: nowrap; color: #000; }
.tab span { grid-column: 3; grid-row: 1; overflow: hidden; width: 24px; letter-spacing: -1.2px; -webkit-mask-image: linear-gradient(90deg, #000 55%, transparent); mask-image: linear-gradient(90deg, #000 55%, transparent); }
.shape { position: absolute; z-index: -1; inset: 0; width: 126px; height: 57px; fill: #d0d0d0; }
.tab:nth-child(1) { z-index: 30; } .tab:nth-child(2) { z-index: 29; } .tab:nth-child(3) { z-index: 28; } .tab:nth-child(4) { z-index: 27; } .tab:nth-child(5) { z-index: 26; } .tab:nth-child(6) { z-index: 25; } .tab:nth-child(7) { z-index: 24; } .tab:nth-child(8) { z-index: 23; } .tab:nth-child(9) { z-index: 22; } .tab:nth-child(10) { z-index: 21; } .tab:nth-child(11) { z-index: 20; } .tab:nth-child(12) { z-index: 19; } .tab:nth-child(13) { z-index: 18; } .tab:nth-child(14) { z-index: 17; } .tab:nth-child(15) { z-index: 16; } .tab:nth-child(16) { z-index: 15; } .tab:nth-child(17) { z-index: 14; } .tab:nth-child(18) { z-index: 13; } .tab:nth-child(19) { z-index: 12; } .tab:nth-child(20) { z-index: 11; } .tab:nth-child(21) { z-index: 10; }
.fav { grid-column: 2; grid-row: 1; width: 32px; height: 32px; }
.glyph { font-family: Inter, sans-serif; font-weight: 800; }
.edx { font: 800 23px Inter, sans-serif; }
.tab.active { z-index: 40; grid-template-columns: 36px 41px 1fr; height: 58px; }
.active .shape { fill: #f2f2f2; height: 58px; }
.tab.active span { grid-column: 2; width: 35px; letter-spacing: -1px; -webkit-mask-image: linear-gradient(90deg, #000 60%, transparent); mask-image: linear-gradient(90deg, #000 60%, transparent); }
.close { grid-column: 3; grid-row: 1; width: 17px; height: 17px; }
.newtab { width: 66px; height: 33px; margin: 32px 0 0 -8px; }
.profile { margin: 25px 0 0 21px; font-size: 24px; line-height: 30px; letter-spacing: -.3px; }

.toolbar { height: 74px; flex: none; display: flex; align-items: center; padding: 0 20px 0 22px; background: #f2f2f2; border-bottom: 2px solid #d2d2d2; }
.nav { width: 28px; height: 28px; }
.forward { margin-left: 28px; }
.reload { margin-left: 29px; }
.omnibox { width: 1854px; height: 54px; margin-left: 22px; border: 2px solid #b9b9b9; border-radius: 6px; background: #fff; display: flex; align-items: center; padding: 0 11px 0 15px; font-size: 27px; white-space: nowrap; }
.lock { width: 18px; height: 22px; margin-right: 16px; }
.secure { color: #188048; width: 142px; letter-spacing: .15px; }
.sep { width: 1px; height: 32px; background: #aaa; margin: 0 12px; }
.url { letter-spacing: .1px; }
.url em { font-style: normal; color: #188048; }
.url small { font-size: inherit; color: #808080; }
.star { width: 30px; height: 30px; margin-left: auto; }
.extensions { display: flex; gap: 24px; margin-left: 21px; }
.extensions svg { width: 32px; height: 32px; }

.page { flex: 1; display: flex; flex-direction: column; align-items: center; background: radial-gradient(ellipse 120px 130px at 0 100%, #f5f5f5, rgba(245,245,245,0)), radial-gradient(ellipse 120px 130px at 100% 100%, #f5f5f5, rgba(245,245,245,0)), linear-gradient(rgba(228,228,228,0) 1180px, rgba(228,228,228,.35) 1235px, #e5e5e5 1285px, #e4e4e4 1303px, #cfcfcf), #f5f5f5; }
.banner { width: 510px; height: 5px; flex: none; border-radius: 0 0 6px 6px; border: solid #c0c0c0; border-width: 0 2px 3px; background: linear-gradient(90deg, #b1002e 18%, #1f63b8 82%, #5590d8); box-shadow: -1px 7px 7px #999; }
.title { width: 474px; height: 70px; margin-top: 30px; overflow: visible; }
.title text { font: 900 68px Inter, sans-serif; fill: url(#heading); stroke: url(#heading); stroke-width: 3px; }
.steps { width: 504px; margin-top: 32px; }
.field { width: 1220px; height: 1044px; flex: none; margin-top: 51px; padding: 2px; border: 2px solid #778899; display: grid; grid-template-columns: repeat(4, 300px); grid-auto-rows: 256px; gap: 4px; }
.card { position: relative; border-radius: 8px; background: #fff; box-shadow: -8px 10px 8px #a9a9a9; display: flex; justify-content: center; }
.html5 { width: 128px; height: 180px; margin-top: 38px; }
.html5 text { font-family: Inter, sans-serif; font-weight: 900; }
.webpack { width: 156px; height: 180px; margin: 38px 24px 0 0; }

.desktop { height: 98px; flex: none; padding: 0 62px; background: linear-gradient(rgba(0,0,0,.45), transparent 30px), repeating-linear-gradient(1deg, rgba(10,4,0,0) 0 3px, rgba(10,4,0,.4) 4px 5px, rgba(10,4,0,.1) 7px 9px, rgba(10,4,0,.3) 11px), linear-gradient(90deg, #54332f, #46302a 62px, #7d4c12 2498px, #7a5a18 2530px, #8a4c12); }
.dock { height: 98px; border-radius: 12px 12px 0 0; display: flex; padding-left: 6px; background: linear-gradient(rgba(70,50,40,.12), transparent 40%, rgba(255,140,60,.16)), linear-gradient(90deg, #826e66, #a5756a 170px, #b97b66 420px, #b67960 640px, #a86f4a 760px, #ac7045 850px, #cf7c3a 980px, #d07f38 1300px, #d18038 1500px, #df8732 1680px, #d27b37 1890px, #a2743c 2020px, #8d6f3e 2160px, #92703e 2300px, #b47938); }
.app { width: 79.600px; height: 98px; overflow: visible; filter: drop-shadow(0 2px 1px rgba(0,0,0,.25)); }
.petals ellipse { mix-blend-mode: multiply; opacity: .9; }
.divider { width: 2px; height: 70px; margin: 14px 0 0 16px; background: #84521c; }
.trash { margin-left: 17px; }
.month { font: 500 11.500px Inter, sans-serif; fill: #fff; }
.day { font: 300 32px Roboto, sans-serif; fill: #222; }
.code { font: 700 24px Roboto, sans-serif; fill: #fff; }
.badge { font: 400 15px Roboto, sans-serif; fill: #fff; text-anchor: middle; }
```
